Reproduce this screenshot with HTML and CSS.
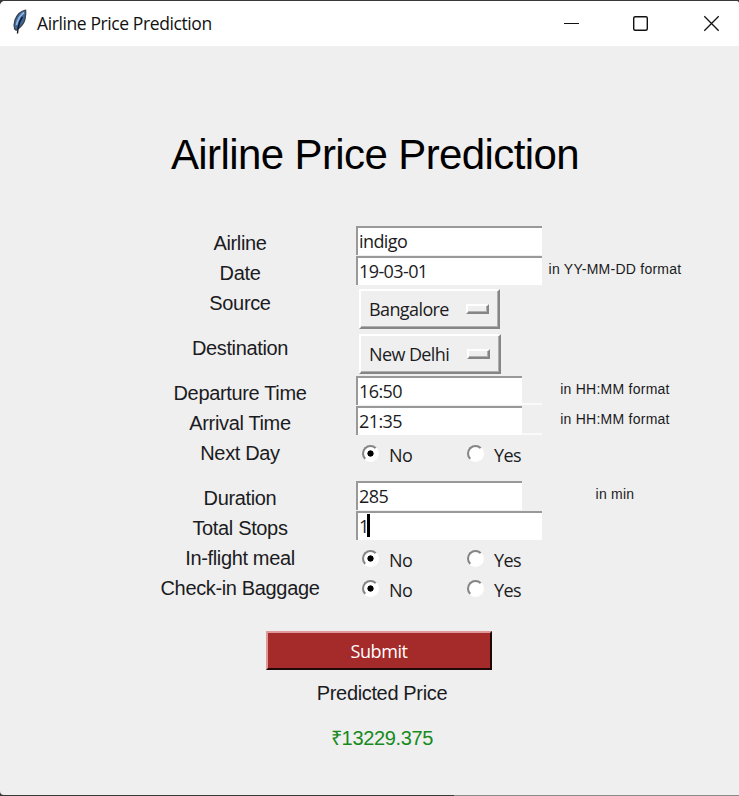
FILE: index.html
```html
<!DOCTYPE html>
<html lang="en">
<head>
<meta charset="utf-8">
<title>Airline Price Prediction</title>
<link rel="stylesheet" href="styles.css">
</head>
<body>
<div class="window">
  <header class="titlebar">
    <svg class="feather" width="16" height="26" viewBox="0 0 16 26">
      <path d="M13.600 1.200C9 2 5 6 3 11c-1 3-1.200 6-.3 9l1.500 1.200C9 18 12 15 13 10c.6-3 1-6 .6-8.800z" fill="#3b689f" stroke="#3d4552" stroke-width="1.300"/>
      <path d="M12 3.500C8 6.500 5.500 11 4.500 16" stroke="#8fb5e2" stroke-width="1.800" fill="none"/>
      <path d="M10.500 8C7.500 12 6 17 5.500 24.500" stroke="#101722" stroke-width="1.400" fill="none"/>
    </svg>
    <span class="caption">Airline Price Prediction</span>
    <svg class="controls" width="160" height="20" viewBox="0 0 160 20" fill="none" stroke="#111">
      <path d="M4 9.500h15" stroke-width="1"/>
      <rect x="73.700" y="2.700" width="13.600" height="13.600" rx="1.500" stroke-width="1.400"/>
      <path d="M144.300 2.300l14.400 14.400M158.700 2.300l-14.400 14.400" stroke-width="1.300"/>
    </svg>
  </header>
  <main>
    <h1>Airline Price Prediction</h1>
    <form class="form">
      <div class="row"><span class="label">Airline</span><div class="entry"><span>indigo</span></div></div>
      <div class="row"><span class="label">Date</span><div class="entry"><span>19-03-01</span></div><span class="hint date">in YY-MM-DD format</span></div>
      <div class="row tall"><span class="label">Source</span><div class="menu"><span>Bangalore</span><i></i></div></div>
      <div class="row tall"><span class="label">Destination</span><div class="menu delhi"><span>New Delhi</span><i></i></div></div>
      <div class="row"><span class="label">Departure Time</span><div class="cell"><div class="entry short"><span>16:50</span></div></div><span class="hint">in HH:MM format</span></div>
      <div class="row"><span class="label">Arrival Time</span><div class="cell"><div class="entry short"><span>21:35</span></div></div><span class="hint">in HH:MM format</span></div>
      <div class="row tall"><span class="label">Next Day</span><div class="radios"><b class="dot on"></b><span>No</span><b class="dot"></b><span>Yes</span></div></div>
      <div class="row"><span class="label">Duration</span><div class="entry short"><span>285</span></div><span class="hint">in min</span></div>
      <div class="row"><span class="label">Total Stops</span><div class="entry"><span>1</span><i class="caret"></i></div></div>
      <div class="row"><span class="label">In-flight meal</span><div class="radios"><b class="dot on"></b><span>No</span><b class="dot"></b><span>Yes</span></div></div>
      <div class="row"><span class="label">Check-in Baggage</span><div class="radios"><b class="dot on"></b><span>No</span><b class="dot"></b><span>Yes</span></div></div>
    </form>
    <div class="result">
      <button class="submit" type="button">Submit</button>
      <div class="predicted">Predicted Price</div>
      <div class="price">₹13229.375</div>
    </div>
  </main>
</div>
</body>
</html>
```
FILE: styles.css
```css
* { box-sizing: border-box; }
body { margin: 0; min-height: 796px; background: linear-gradient(90deg, #3b3839 454px, #8a8a8a 454px) 0 100% / 100% 2px no-repeat, #3b3839; color: #1b1b22; overflow: hidden; font-family: "Liberation Sans", sans-serif; }
html { background: #3b3839; }
.window { height: 794px; margin-top: 1px; background: #efefef; border-radius: 5px 3px 0 4px; overflow: hidden; }
.titlebar { height: 45px; background: #fff; display: flex; align-items: center; padding: 0 19px 0 12px; }
.feather { flex: none; margin-top: -3px; }
.caption { margin: -1px 0 0 9px; font: 17.5px/24px "Open Sans", sans-serif; letter-spacing: -.4px; color: #111; flex: 1; white-space: nowrap; }
.controls { flex: none; }
h1 { margin: 84px 0 0; padding-left: 11px; font-size: 42px; letter-spacing: -.6px; font-weight: 400; line-height: 50px; text-align: center; color: #000; height: 96px; white-space: nowrap; }
.row { display: grid; grid-template-columns: 232px 186px 146px; height: 30px; align-items: start; padding-left: 124px; }
.tall { height: 45px; }
.label { text-align: center; font-size: 20px; letter-spacing: -.35px; line-height: 34px; height: 30px; white-space: nowrap; }
.entry { height: 29px; background: #fff; border: solid; border-width: 1.500px 0 0 1.500px; border-color: #999; border-top-width: 2px; border-left-width: 2px; display: flex; align-items: center; padding: 0 0 2px 1px; font: 18px/24px "Open Sans", sans-serif; letter-spacing: -.6px; }
.cell { border-bottom: 2px solid #fafafa; height: 29px; }
.short { width: 166px; }
.caret { width: 3px; height: 23px; margin-left: -2px; background: #000; }
.menu { margin: 3px 0 0 3px; width: 141px; height: 40px; border: 2px solid; border-color: #fff #858585 #858585 #fff; box-shadow: inset -1px -1px #b0b0b0; display: flex; align-items: center; justify-content: space-between; padding: 0 9px 0 8px; font: 18px/26px "Open Sans", sans-serif; letter-spacing: -.6px; white-space: nowrap; }
.delhi { width: 142px; }
.menu i { width: 23px; height: 10px; border: 2px solid; border-color: #fff #858585 #858585 #fff; box-shadow: inset -1px -1px #b0b0b0; margin-top: -1px; }
.hint { font-size: 14px; line-height: 26px; text-align: center; letter-spacing: .25px; white-space: nowrap; }
.radios { display: grid; grid-template-columns: 27px 78px 27px 40px; padding-left: 6px; height: 36px; align-items: center; font: 18px/26px "Open Sans", sans-serif; letter-spacing: -.6px; }
.radios span { padding-top: 1px; }
.dot { width: 17px; height: 17px; margin-top: -1px; border-radius: 50%; background: #fff; border: 2px solid; border-color: #858585 #fff #fff #858585; }
.on { background: radial-gradient(circle, #000 2.800px, #fff 3.400px); }
.result { width: 250px; margin: 30px 0 0 257px; display: flex; flex-direction: column; align-items: center; font-size: 20px; letter-spacing: -.35px; }
.submit { width: 226px; height: 39px; margin-left: -6px; border: 2px solid; border-color: #e09999 #1e0808 #1e0808 #e09999; background: #a52a2a; color: #fff; font: 18px/26px "Open Sans", sans-serif; letter-spacing: -.4px; padding: 0; }
.predicted { line-height: 30px; margin-top: 8px; }
.price { line-height: 30px; margin-top: 15px; color: #168a20; }
```
